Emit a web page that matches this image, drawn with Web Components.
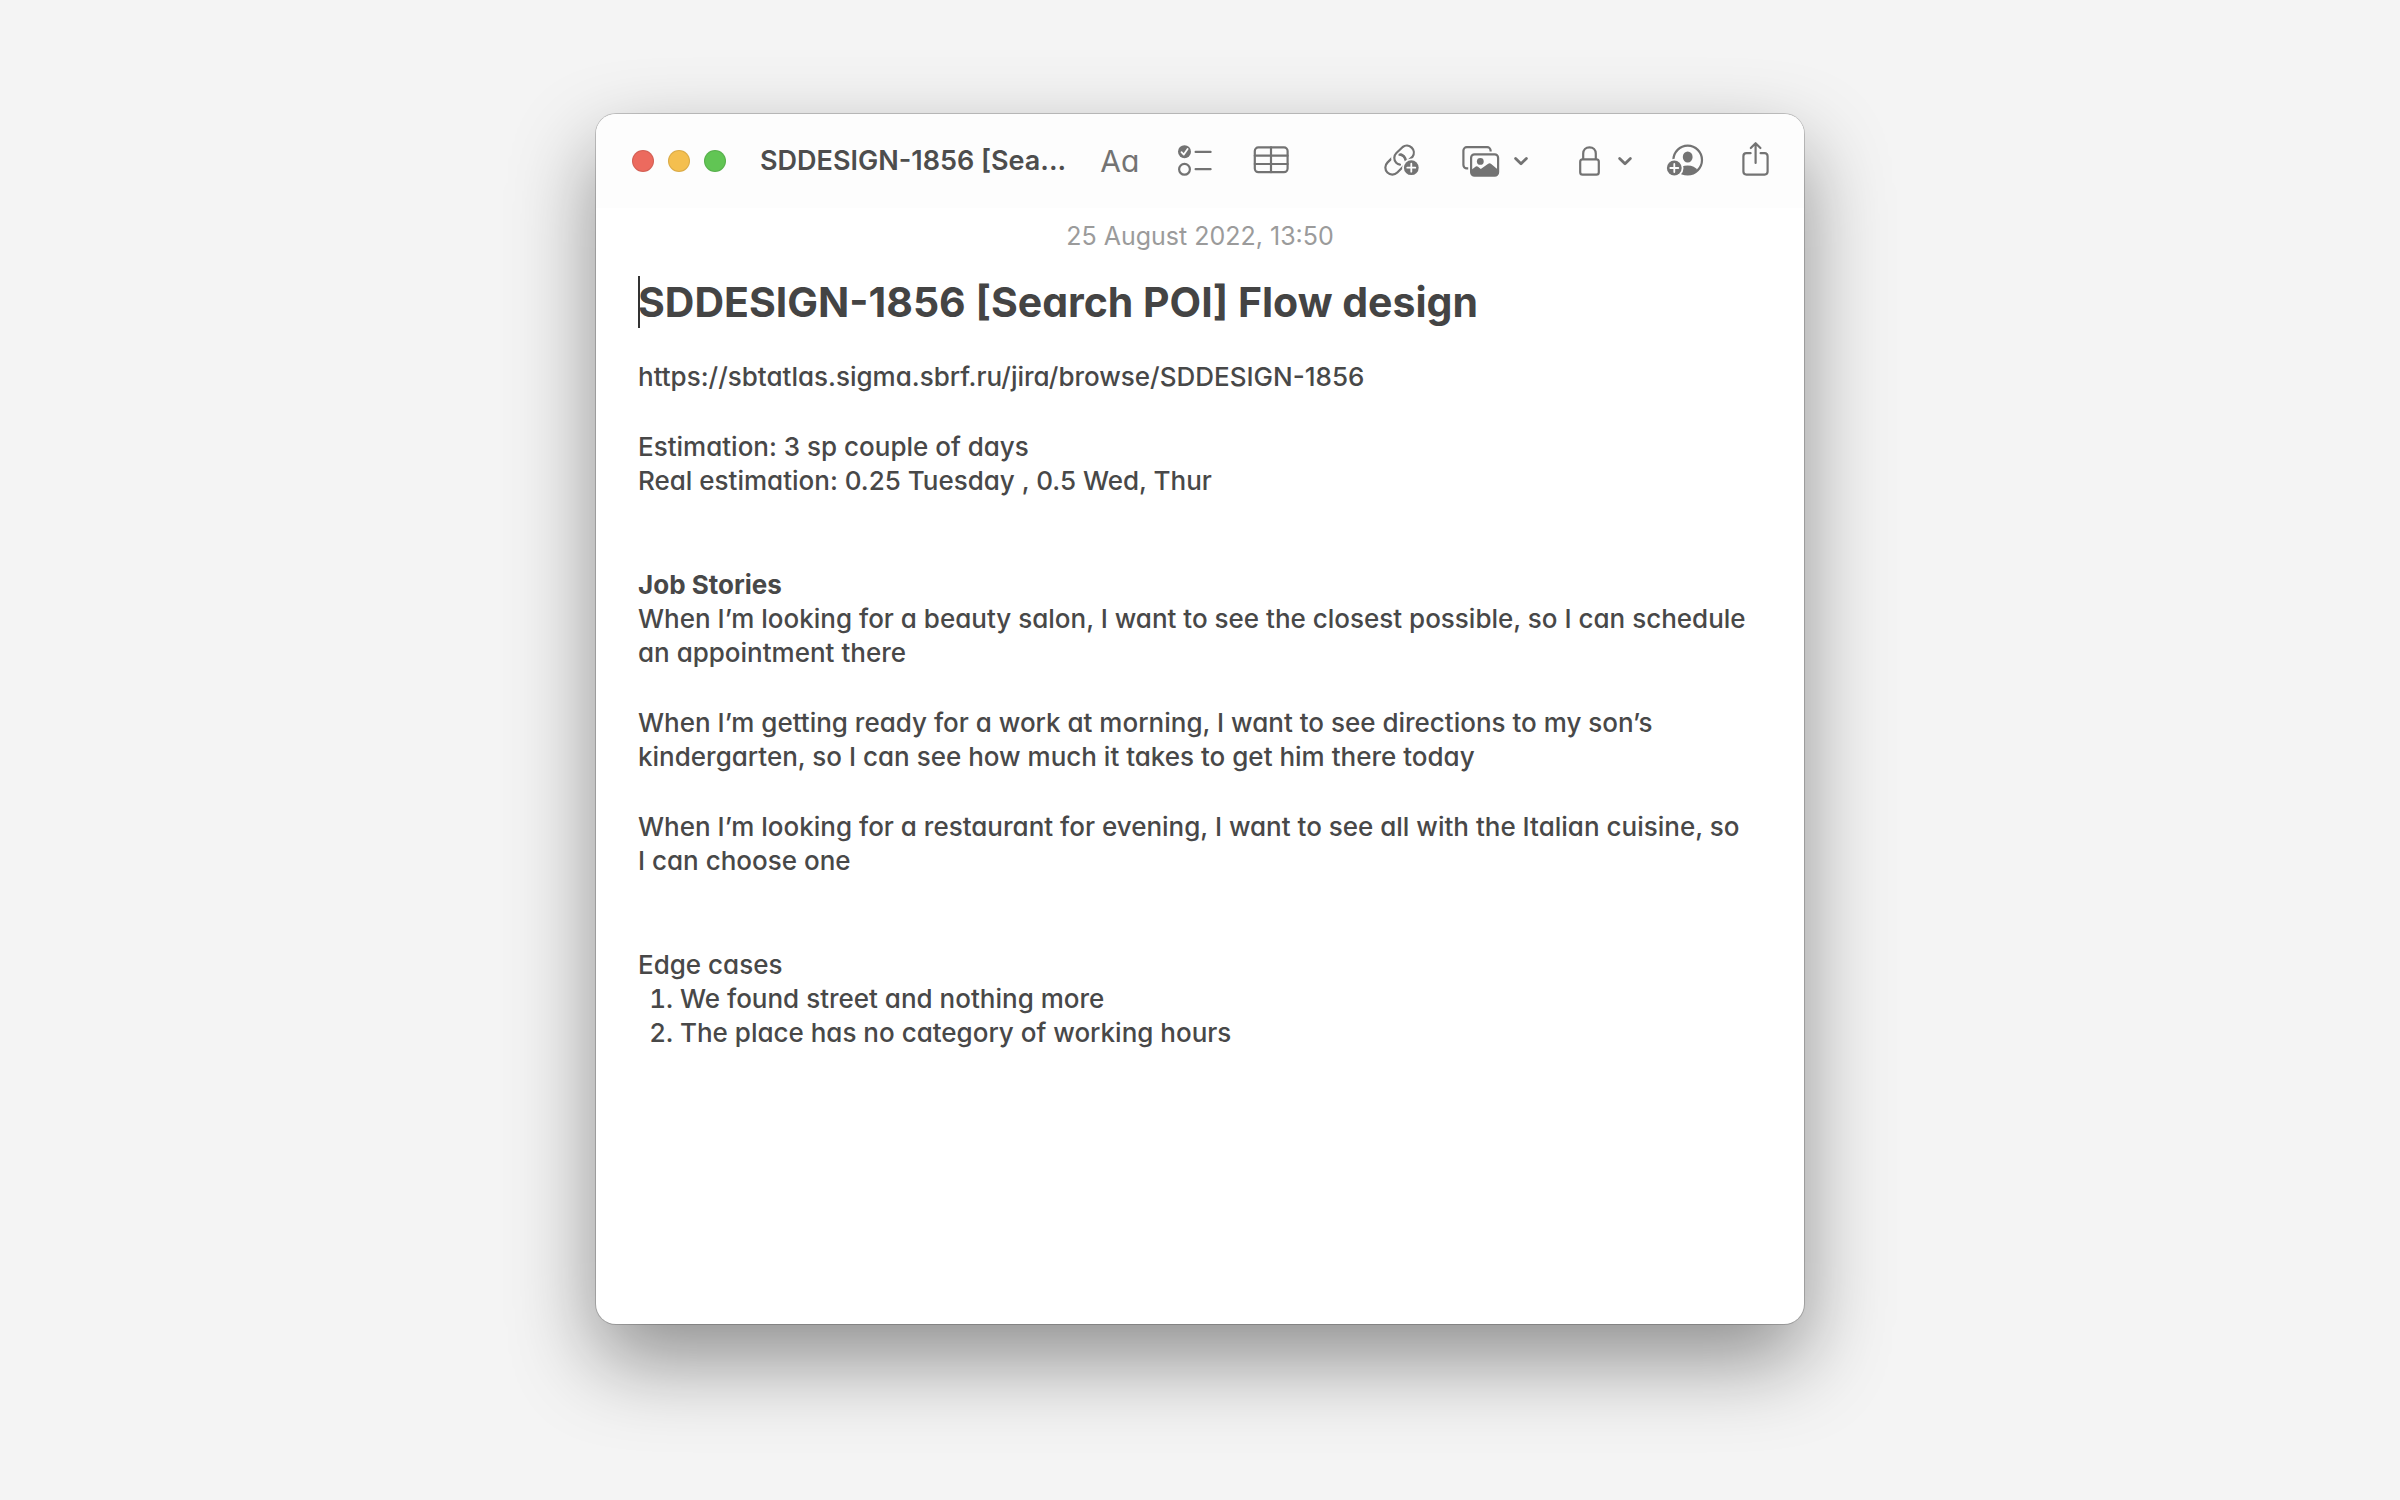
<!DOCTYPE html>
<html lang="en">
<head>
<meta charset="utf-8">
<meta name="viewport" content="width=device-width, initial-scale=1">
<title>Notes</title>
<style>
  body { margin: 0; background: #f4f4f4; font-family: Inter, "Liberation Sans", sans-serif; }
</style>
</head>
<body>
<notes-app></notes-app>

<script>
const ICONS = {
  checklist: [40, `<circle cx="9.5" cy="10.7" r="6.5" fill="currentColor" stroke="none"/><path d="M6.5 11.2 8.8 13.6 12.6 8" stroke="#fdfdfd" stroke-width="1.8"/><circle cx="9.5" cy="28.3" r="5.4"/><path d="M20.6 10.9H35.6M20.6 28.2H35.6"/>`],
  table: [40, `<rect x="3.8" y="6.4" width="32.8" height="24.8" rx="3.6"/><path d="M20 6.4V31.2M3.8 14.7H36.6M3.8 23H36.6"/>`],
  link: [40, `<rect x="-11.6" y="-7" width="23.2" height="14" rx="7" transform="translate(11.6 23.3) rotate(-45)"/><path d="M12.2 12 18.6 6A7 7 0 0 1 28.6 16L24.6 20M12.2 12A7 7 0 0 0 12.2 22L15 23.6" stroke="#fdfdfd" stroke-width="6" stroke-linecap="butt"/><path d="M24 19.8 28.6 15.6A7 7 0 0 0 18.7 6L12.4 12A7 7 0 0 0 12.2 21.8Q13.8 23.4 16 23.7M15.6 13.6A7 7 0 0 1 21.4 18.6"/><circle cx="27.3" cy="26.7" r="9.2" fill="#fdfdfd" stroke="none"/><circle cx="27.3" cy="26.7" r="7.4" fill="currentColor" stroke="none"/><path d="M27.3 22.7V30.7M23.3 26.7H31.3" stroke="#fdfdfd" stroke-width="1.8"/>`],
  photos: [46, `<rect x="3.4" y="6.2" width="27.2" height="21.2" rx="3.4"/><rect x="8.2" y="10.4" width="32.4" height="27" rx="5" fill="#fdfdfd" stroke="none"/><rect x="11.1" y="13.3" width="27" height="21.4" rx="3.4"/><circle cx="20.3" cy="20.4" r="3.4" fill="currentColor" stroke="none"/><path d="M11.5 28.8 15.8 25.5Q17 24.8 18 25.7L20.8 28 28.2 22.8Q29.8 21.8 31.2 23L37.8 28.4V32Q37.8 34.6 35 34.6H14Q11.4 34.6 11.4 32Z" fill="currentColor" stroke="none"/>`],
  chevron: [14, `<path d="M1.6 17.4 7 22.8 12.4 17.4" stroke-width="2.8"/>`],
  lock: [46, `<rect x="16.2" y="18.4" width="18.6" height="15.2" rx="2.4"/><path d="M19.2 18V12.6C19.2 8.6 21.8 6.3 25.5 6.3S31.8 8.6 31.8 12.6V18"/>`],
  person: [38, `<circle cx="19.7" cy="19" r="14.3"/><ellipse cx="19.7" cy="16" rx="4.9" ry="5.6" fill="currentColor" stroke="none"/><path d="M9.8 29.4Q12.8 24.4 19.7 24.4T29.6 29.4Q25.6 33.4 19.7 33.4T9.8 29.4Z" fill="currentColor" stroke="none"/><circle cx="6.3" cy="27" r="9.2" fill="#fdfdfd" stroke="none"/><circle cx="6.3" cy="27" r="7.4" fill="currentColor" stroke="none"/><path d="M6.3 23V31M2.3 27H10.3" stroke="#fdfdfd" stroke-width="1.8"/>`],
  share: [28, `<path d="M8.6 12.2H4.4Q1.4 12.2 1.4 15.2V30.6Q1.4 33.6 4.4 33.6H22.6Q25.6 33.6 25.6 30.6V15.2Q25.6 12.2 22.6 12.2H18.6M13.6 22V2.6M8.8 7 13.6 2.2 18.4 7"/>`]
};

const define = (name, html) => {
  const template = document.createElement('template');
  template.innerHTML = html;
  customElements.define(name, class extends HTMLElement {
    constructor() {
      super();
      this.attachShadow({ mode: 'open' }).append(template.content.cloneNode(true));
    }
  });
};

// <tool-icon name="lock">
customElements.define('tool-icon', class extends HTMLElement {
  connectedCallback() {
    if (this.shadowRoot) return;
    const [width, shapes] = ICONS[this.getAttribute('name')];
    this.attachShadow({ mode: 'open' }).innerHTML = `
      <style>
        :host { display: block; }
        svg { display: block; overflow: visible; fill: none; stroke: currentColor; stroke-width: 2.2; stroke-linecap: round; stroke-linejoin: round; }
      </style>
      <svg width="${width}" height="40" viewBox="0 0 ${width} 40" aria-hidden="true">${shapes}</svg>`;
  }
});

// <tool-button label="…">: a toolbar button with slotted contents
customElements.define('tool-button', class extends HTMLElement {
  connectedCallback() {
    if (this.shadowRoot) return;
    this.attachShadow({ mode: 'open' }).innerHTML = `
      <style>
        :host { display: block; flex: none; }
        button { display: flex; align-items: center; gap: 8px; height: 40px; margin: 0; padding: 0; border: 0; background: none; color: #737373; font: inherit; font-size: 30px; }
      </style>
      <button type="button" aria-label="${this.getAttribute('label')}"><slot></slot></button>`;
  }
});

define('traffic-lights', `
  <style>
    :host { display: flex; gap: 14px; flex: none; }
    button { width: 22px; height: 22px; padding: 0; border: 1px solid #0000001a; border-radius: 50%; }
    .close { background: #ec6a5e; }
    .minimise { background: #f4bf4f; }
    .zoom { background: #61c554; }
  </style>
  <button class="close" type="button" aria-label="Close"></button>
  <button class="minimise" type="button" aria-label="Minimise"></button>
  <button class="zoom" type="button" aria-label="Zoom"></button>`);

define('note-toolbar', `
  <style>
    :host { display: flex; align-items: center; gap: 34px; height: 94px; padding: 0 34px 0 36px; background: #fdfdfd; }
    .name { flex: none; white-space: nowrap; font-size: 27px; line-height: 32px; font-weight: 600; color: #4d4d4d; }
    .tools { display: flex; gap: 36px; }
    .end { margin-left: auto; }
    .format { font-feature-settings: "cv11"; }
  </style>
  <traffic-lights></traffic-lights>
  <span class="name"><slot></slot></span>
  <div class="tools">
    <tool-button label="Format" class="format">Aa</tool-button>
    <tool-button label="Checklist"><tool-icon name="checklist"></tool-icon></tool-button>
    <tool-button label="Table"><tool-icon name="table"></tool-icon></tool-button>
  </div>
  <div class="tools end">
    <tool-button label="Add link"><tool-icon name="link"></tool-icon></tool-button>
    <tool-button label="Media"><tool-icon name="photos"></tool-icon><tool-icon name="chevron"></tool-icon></tool-button>
    <tool-button label="Lock"><tool-icon name="lock"></tool-icon><tool-icon name="chevron"></tool-icon></tool-button>
    <tool-button label="Collaborate"><tool-icon name="person"></tool-icon></tool-button>
    <tool-button label="Share"><tool-icon name="share"></tool-icon></tool-button>
  </div>`);

define('note-body', `
  <style>
    :host { display: block; padding: 11px 42px 42px; color: #484848; font-size: 26px; font-weight: 500; line-height: 34px; font-feature-settings: "cv11"; }
    time { display: block; margin-bottom: 23px; text-align: center; font-size: 25px; font-weight: 400; color: #9b9b9b; }
    h1 { position: relative; margin: 0 0 32px; font-size: 41px; line-height: 52px; font-weight: 700; color: #444; }
    .caret { position: absolute; left: 0; top: 0; width: 2px; height: 100%; background: #333; }
    .text { padding-right: 12px; }
    p, h2, ol { margin: 0; }
    h2 { font-size: inherit; font-weight: 700; }
    a { color: inherit; text-decoration: none; }
    section { margin-top: 36px; }
    section.far { margin-top: 70px; }
    ol { padding-left: 42px; }
  </style>
  <time datetime="2022-08-25T13:50">25 August 2022, 13:50</time>
  <h1><span class="caret"></span>SDDESIGN-1856 [Search POI] Flow design</h1>
  <div class="text">
    <p><a href="https://sbtatlas.sigma.sbrf.ru/jira/browse/SDDESIGN-1856">https://sbtatlas.sigma.sbrf.ru/jira/browse/SDDESIGN-1856</a></p>
    <section>
      <p>Estimation: 3 sp couple of days</p>
      <p>Real estimation: 0.25 Tuesday , 0.5 Wed, Thur</p>
    </section>
    <section class="far">
      <h2>Job Stories</h2>
      <p>When I’m looking for a beauty salon, I want to see the closest possible, so I can schedule an appointment there</p>
    </section>
    <section>
      <p>When I’m getting ready for a work at morning, I want to see directions to my son’s kindergarten, so I can see how much it takes to get him there today</p>
    </section>
    <section>
      <p>When I’m looking for a restaurant for evening, I want to see all with the Italian cuisine, so I can choose one</p>
    </section>
    <section class="far">
      <p>Edge cases</p>
      <ol>
        <li>We found street and nothing more</li>
        <li>The place has no category of working hours</li>
      </ol>
    </section>
  </div>`);

define('note-window', `
  <style>
    :host { display: block; box-sizing: border-box; width: 100%; max-width: 1208px; min-height: calc(100vh - 290px); border-radius: 20px; overflow: hidden; background: #fff; box-shadow: 0 0 0 1px #00000030, 0 36px 84px #0000006b; }
  </style>
  <slot></slot>`);

define('notes-app', `
  <style>
    :host { display: flex; justify-content: center; align-items: flex-start; box-sizing: border-box; min-height: 100vh; padding: 114px 40px 176px; }
  </style>
  <note-window>
    <note-toolbar>SDDESIGN-1856 [Sea...</note-toolbar>
    <note-body></note-body>
  </note-window>`);
</script>
</body>
</html>
